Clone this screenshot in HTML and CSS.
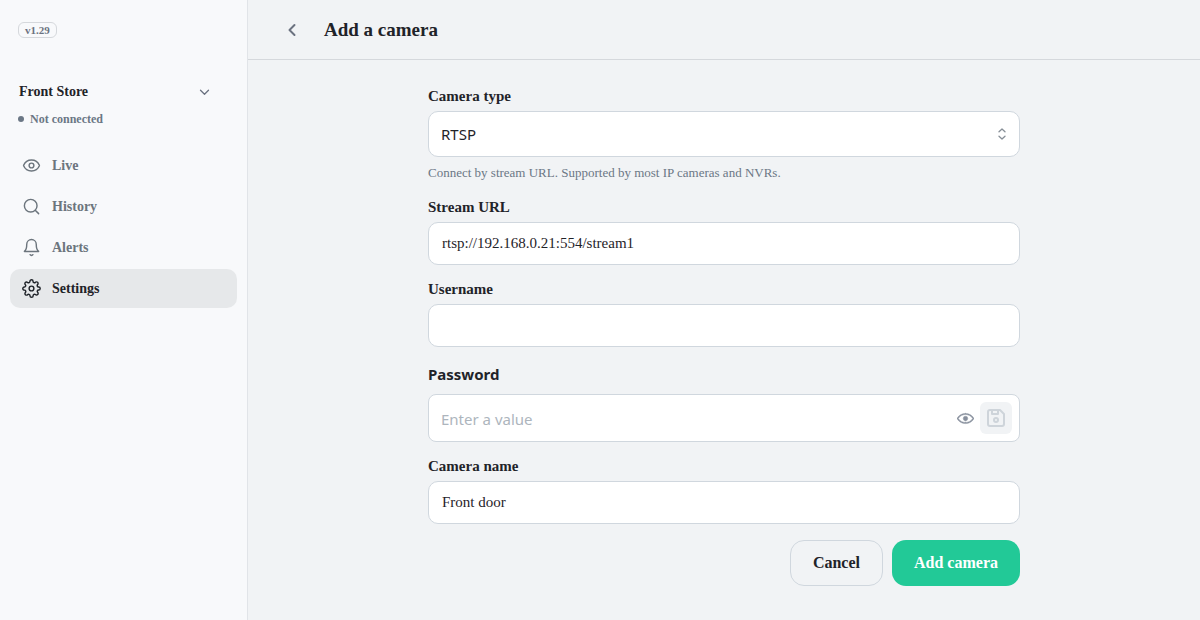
FILE: index.html
```html
<!DOCTYPE html>
<html lang="en">
<head>
    <meta charset="UTF-8">
    <meta name="viewport" content="width=device-width, initial-scale=1">
    <title>Add a camera</title>
    <link rel="stylesheet" href="styles.css">
</head>
<body>
    <aside class="sidebar">
        <span class="version">v1.29</span>

        <button class="store" type="button">
            <span>Front Store</span>
            <svg class="chevron" viewBox="0 0 12 12"><path d="M2.500 4.200 6.500 8.200 10.500 4.200"/></svg>
        </button>
        <p class="status"><span class="dot"></span>Not connected</p>

        <nav class="nav">
            <a class="nav-item" href="#live">
                <svg class="icon" viewBox="0 0 24 24"><path d="M2.062 12.348a1 1 0 0 1 0-.696 10.750 10.750 0 0 1 19.876 0 1 1 0 0 1 0 .696 10.750 10.750 0 0 1-19.876 0"/><circle cx="12" cy="12" r="3"/></svg>
                Live
            </a>
            <a class="nav-item" href="#history">
                <svg class="icon" viewBox="0 0 24 24"><circle cx="11" cy="11" r="8"/><path d="m21 21-4.300-4.300"/></svg>
                History
            </a>
            <a class="nav-item" href="#alerts">
                <svg class="icon" viewBox="0 0 24 24"><path d="M18 8A6 6 0 0 0 6 8c0 7-3 9-3 9h18s-3-2-3-9"/><path d="M13.730 21a2 2 0 0 1-3.460 0"/></svg>
                Alerts
            </a>
            <a class="nav-item active" href="#settings">
                <svg class="icon" viewBox="0 0 24 24"><circle cx="12" cy="12" r="3"/><path d="M19.400 15a1.650 1.650 0 0 0 .33 1.820l.06.06a2 2 0 0 1 0 2.830 2 2 0 0 1-2.830 0l-.06-.06a1.650 1.650 0 0 0-1.820-.33 1.650 1.650 0 0 0-1 1.510V21a2 2 0 0 1-2 2 2 2 0 0 1-2-2v-.09A1.650 1.650 0 0 0 9 19.400a1.650 1.650 0 0 0-1.820.33l-.06.06a2 2 0 0 1-2.830 0 2 2 0 0 1 0-2.830l.06-.06a1.650 1.650 0 0 0 .33-1.820 1.650 1.650 0 0 0-1.510-1H3a2 2 0 0 1-2-2 2 2 0 0 1 2-2h.09A1.650 1.650 0 0 0 4.600 9a1.650 1.650 0 0 0-.33-1.820l-.06-.06a2 2 0 0 1 0-2.830 2 2 0 0 1 2.830 0l.06.06a1.650 1.650 0 0 0 1.820.33H9a1.650 1.650 0 0 0 1-1.510V3a2 2 0 0 1 2-2 2 2 0 0 1 2 2v.09a1.650 1.650 0 0 0 1 1.510 1.650 1.650 0 0 0 1.820-.33l.06-.06a2 2 0 0 1 2.830 0 2 2 0 0 1 0 2.830l-.06.06a1.650 1.650 0 0 0-.33 1.820V9a1.650 1.650 0 0 0 1.510 1H21a2 2 0 0 1 2 2 2 2 0 0 1-2 2h-.09a1.650 1.650 0 0 0-1.510 1z"/></svg>
                Settings
            </a>
        </nav>
    </aside>

    <main class="main">
        <header class="header">
            <button class="back" type="button" aria-label="Back">
                <svg viewBox="0 0 16 16"><path d="M10.500 3 5.500 8l5 5"/></svg>
            </button>
            <h1>Add a camera</h1>
        </header>

        <form class="form">
            <div class="field">
                <label for="type">Camera type</label>
                <div class="control">
                    <select id="type" class="input select">
                        <option>RTSP</option>
                    </select>
                    <svg class="select-arrows" viewBox="0 0 16 16"><path d="M5 5.700 8 3l3 2.700M5 10.300 8 13l3-2.700"/></svg>
                </div>
                <p class="hint">Connect by stream URL. Supported by most IP cameras and NVRs.</p>
            </div>

            <div class="field">
                <label for="url">Stream URL</label>
                <input id="url" class="input" type="text" value="rtsp://192.168.0.21:554/stream1">
            </div>

            <div class="field">
                <label for="username">Username</label>
                <input id="username" class="input" type="text">
            </div>

            <div class="field">
                <label class="label-sans" for="password">Password</label>
                <div class="control">
                    <input id="password" class="input password" type="password" placeholder="Enter a value">
                    <div class="tools">
                        <button class="tool" type="button" aria-label="Show password">
                            <svg viewBox="0 0 15 15"><path fill-rule="evenodd" d="M7.500 11C4.800 11 2.520 9.620 1.100 7.500 2.520 5.380 4.800 4 7.500 4s4.980 1.380 6.400 3.500C12.480 9.620 10.200 11 7.500 11zm0-8C4.310 3 1.650 4.700.080 7.240a.5.5 0 0 0 0 .520C1.650 10.300 4.310 12 7.500 12s5.850-1.700 7.420-4.240a.5.5 0 0 0 0-.520C13.350 4.700 10.690 3 7.500 3zm0 6.500a2 2 0 1 0 0-4 2 2 0 0 0 0 4z"/></svg>
                        </button>
                        <button class="tool save" type="button" aria-label="Save password" disabled>
                            <svg viewBox="0 0 24 24"><path d="M6 4h10l4 4v10a2 2 0 0 1-2 2H6a2 2 0 0 1-2-2V6a2 2 0 0 1 2-2z"/><circle cx="12" cy="14" r="2"/><path d="M14 4v4H8V4"/></svg>
                        </button>
                    </div>
                </div>
            </div>

            <div class="field">
                <label for="name">Camera name</label>
                <input id="name" class="input" type="text" value="Front door">
            </div>

            <div class="actions">
                <button class="btn" type="button">Cancel</button>
                <button class="btn primary" type="submit">Add camera</button>
            </div>
        </form>
    </main>
</body>
</html>
```
FILE: styles.css
```css
* {
    box-sizing: border-box;
}
body {
    margin: 0;
    min-height: 100vh;
    display: flex;
    font-family: "Liberation Serif", "Times New Roman", serif;
    font-size: 15px;
    color: #1f2329;
    background: #f1f3f5;
}
h1, p {
    margin: 0;
}
button {
    font: inherit;
    color: inherit;
    background: none;
    border: none;
    padding: 0;
    cursor: pointer;
}
svg {
    display: block;
    fill: none;
    stroke: currentColor;
    stroke-width: 2;
    stroke-linecap: round;
    stroke-linejoin: round;
}

/* sidebar */
.sidebar {
    flex: 0 0 248px;
    display: flex;
    flex-direction: column;
    align-items: stretch;
    padding: 22px 10px;
    background: #f8f9fb;
    border-right: 1px solid #e1e4e8;
}
.version {
    align-self: flex-start;
    margin-left: 8px;
    padding: 0 6px;
    font-size: 11px;
    font-weight: bold;
    line-height: 14px;
    color: #6b7280;
    border: 1px solid #d5d8dc;
    border-radius: 6px;
}
.store {
    display: flex;
    justify-content: space-between;
    align-items: center;
    margin-top: 44px;
    padding: 0 27px 0 9px;
    font-size: 14px;
    font-weight: bold;
    line-height: 20px;
}
.chevron {
    width: 12px;
    height: 12px;
    color: #6b7280;
    stroke-width: 1.3;
}
.status {
    display: flex;
    align-items: center;
    gap: 6px;
    margin-top: 9px;
    padding-left: 8px;
    font-size: 12px;
    font-weight: bold;
    line-height: 16px;
    color: #6b7785;
}
.dot {
    width: 6px;
    height: 6px;
    border-radius: 50%;
    background: #6b7785;
}
.nav {
    display: flex;
    flex-direction: column;
    gap: 2px;
    margin-top: 19px;
}
.nav-item {
    display: flex;
    align-items: center;
    gap: 11px;
    height: 39px;
    padding: 0 12px;
    font-size: 14px;
    font-weight: bold;
    color: #6c757d;
    text-decoration: none;
    border-radius: 10px;
}
.nav-item.active {
    color: #1f2329;
    background: #e6e8ea;
}
.icon {
    width: 19px;
    height: 19px;
    stroke-width: 1.8;
}

/* main column */
.main {
    flex: 1;
    min-width: 0;
}
.header {
    display: flex;
    align-items: center;
    gap: 16px;
    height: 60px;
    padding: 0 28px;
    border-bottom: 1px solid #d5d8dc;
}
.header h1 {
    font-size: 19px;
    line-height: 24px;
}
.back {
    display: grid;
    place-items: center;
    width: 32px;
    height: 32px;
    color: #6b7280;
}
.back svg {
    width: 16px;
    height: 16px;
}

/* form */
.form {
    display: flex;
    flex-direction: column;
    gap: 16px;
    max-width: 640px;
    margin: 0 auto;
    padding: 28px 24px;
}
.field {
    display: flex;
    flex-direction: column;
    gap: 6px;
}
.field label {
    font-weight: bold;
    line-height: 17px;
}
.field .label-sans {
    padding-bottom: 2px;
    font-family: "Noto Sans", sans-serif;
    line-height: 23px;
}
.control {
    position: relative;
}
.input {
    display: block;
    width: 100%;
    height: 43px;
    padding: 0 13px;
    font: inherit;
    color: inherit;
    background: #fff;
    border: 1px solid #d0d7de;
    border-radius: 10px;
    outline: none;
}
.select {
    appearance: none;
    height: 46px;
    padding: 0 12px;
    font-family: "Noto Sans", sans-serif;
}
.select-arrows {
    position: absolute;
    top: 15px;
    right: 10px;
    width: 16px;
    height: 16px;
    color: #868e96;
    stroke-width: 1.3;
    pointer-events: none;
}
.hint {
    font-size: 13px;
    line-height: 20px;
    color: #6b7785;
}
.password {
    height: 48px;
    padding: 2px 76px 0 12px;
    font-family: "Noto Sans", sans-serif;
    border-radius: 8px;
}
.password::placeholder {
    color: #adb5bd;
}
.tools {
    position: absolute;
    top: 0;
    right: 8px;
    bottom: 0;
    display: flex;
    align-items: center;
}
.tool {
    display: grid;
    place-items: center;
    width: 30px;
    height: 32px;
    color: #868e9c;
    border-radius: 6px;
}
.tool svg {
    width: 17px;
    height: 17px;
    fill: currentColor;
    stroke-width: 0.4;
}
.tool.save {
    width: 32px;
    color: #ced4da;
    background: #f1f3f5;
}
.save svg {
    width: 24px;
    height: 24px;
    fill: none;
    stroke-width: 2;
}
.actions {
    display: flex;
    justify-content: flex-end;
    gap: 9px;
}
.btn {
    height: 46px;
    padding: 0 22px;
    font-size: 16px;
    font-weight: bold;
    border: 1px solid #d0d7de;
    border-radius: 14px;
}
.btn.primary {
    color: #fff;
    background: #22c997;
    border: none;
}
```
